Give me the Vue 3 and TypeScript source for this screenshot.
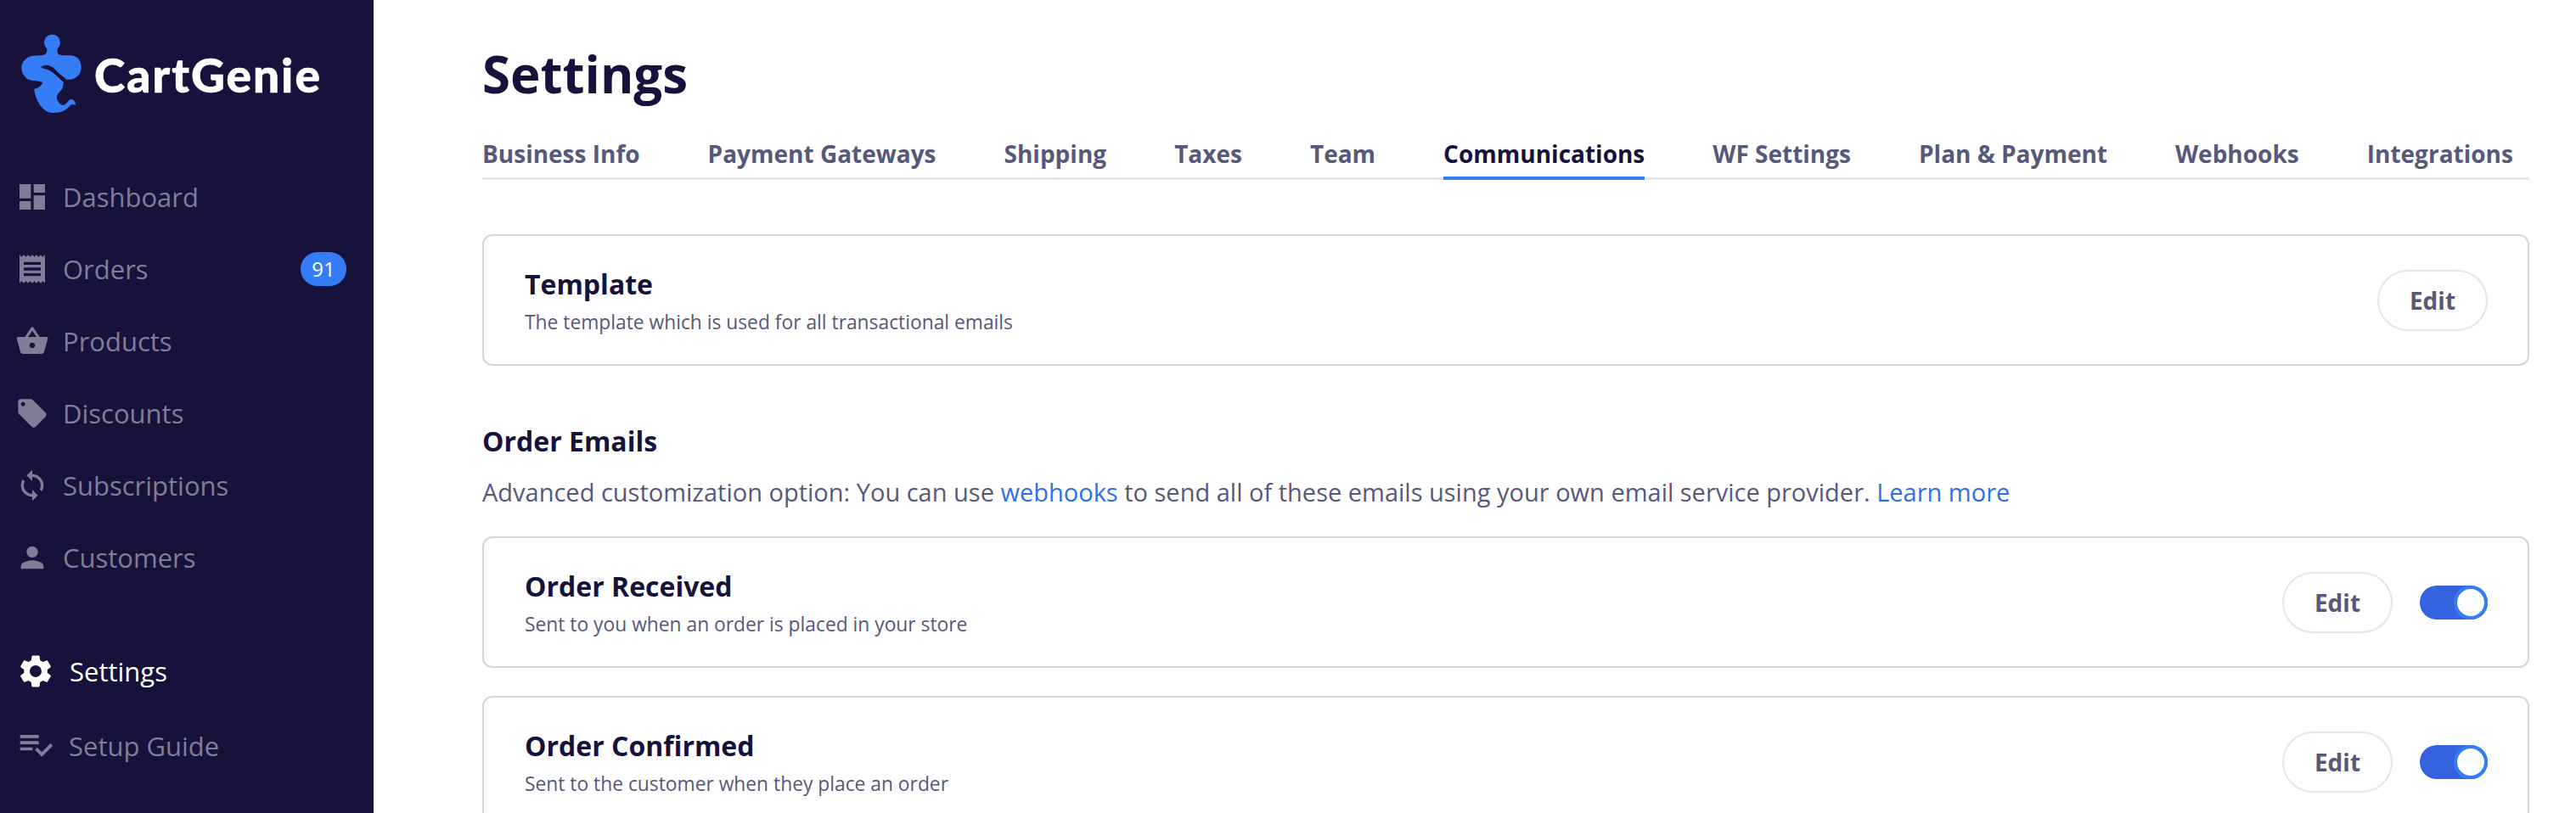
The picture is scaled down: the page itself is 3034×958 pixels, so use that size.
<script setup lang="ts">
interface NavItem { label: string; path: string; badge?: string }
const nav: NavItem[] = [
  { label: 'Dashboard', path: 'M3 13h8V3H3v10zm0 8h8v-6H3v6zm10 0h8V11h-8v10zm0-18v6h8V3h-8z' },
  { label: 'Orders', badge: '91', path: 'M18 17H6v-2h12v2zm0-4H6v-2h12v2zm0-4H6V7h12v2zM3 22l1.5-1.5L6 22l1.5-1.5L9 22l1.5-1.5L12 22l1.5-1.5L15 22l1.5-1.5L18 22l1.5-1.5L21 22V2l-1.5 1.5L18 2l-1.5 1.5L15 2l-1.5 1.5L12 2l-1.5 1.5L9 2 7.5 3.5 6 2 4.5 3.5 3 2v20z' },
  { label: 'Products', path: 'M17.21 9l-4.38-6.56c-.19-.28-.51-.42-.83-.42-.32 0-.64.14-.83.43L6.79 9H2c-.55 0-1 .45-1 1 0 .09.01.18.04.27l2.54 9.27c.23.84 1 1.46 1.92 1.46h13c.92 0 1.69-.62 1.93-1.46l2.54-9.27L23 10c0-.55-.45-1-1-1h-4.79zM9 9l3-4.4L15 9H9zm3 8c-1.1 0-2-.9-2-2s.9-2 2-2 2 .9 2 2-.9 2-2 2z' },
  { label: 'Discounts', path: 'M21.41 11.58l-9-9C12.05 2.22 11.55 2 11 2H4c-1.1 0-2 .9-2 2v7c0 .55.22 1.05.59 1.42l9 9c.36.36.86.58 1.41.58.55 0 1.05-.22 1.41-.59l7-7c.37-.36.59-.86.59-1.41 0-.55-.23-1.06-.59-1.42zM5.5 7C4.67 7 4 6.33 4 5.5S4.67 4 5.5 4 7 4.67 7 5.5 6.33 7 5.5 7z' },
  { label: 'Subscriptions', path: 'M12 4V1L8 5l4 4V6c3.31 0 6 2.69 6 6 0 1.01-.25 1.97-.7 2.8l1.46 1.46C19.54 15.03 20 13.57 20 12c0-4.42-3.58-8-8-8zm0 14c-3.31 0-6-2.69-6-6 0-1.01.25-1.97.7-2.8L5.24 7.74C4.46 8.97 4 10.43 4 12c0 4.42 3.58 8 8 8v3l4-4-4-4v3z' },
  { label: 'Customers', path: 'M12 12c2.21 0 4-1.79 4-4s-1.79-4-4-4-4 1.79-4 4 1.79 4 4 4zm0 2c-2.67 0-8 1.34-8 4v2h16v-2c0-2.66-5.33-4-8-4z' },
]
const gear = 'M19.14 12.94c.04-.3.06-.61.06-.94 0-.32-.02-.64-.07-.94l2.03-1.58c.18-.14.23-.41.12-.61l-1.92-3.32c-.12-.22-.37-.29-.59-.22l-2.39.96c-.5-.38-1.03-.7-1.62-.94l-.36-2.54c-.04-.24-.24-.41-.48-.41h-3.84c-.24 0-.43.17-.47.41l-.36 2.54c-.59.24-1.13.57-1.62.94l-2.39-.96c-.22-.08-.47 0-.59.22L2.74 8.87c-.12.21-.08.47.12.61l2.03 1.58c-.05.3-.09.63-.09.94s.02.64.07.94l-2.03 1.58c-.18.14-.23.41-.12.61l1.92 3.32c.12.22.37.29.59.22l2.39-.96c.5.38 1.03.7 1.62.94l.36 2.54c.05.24.24.41.48.41h3.84c.24 0 .44-.17.47-.41l.36-2.54c.59-.24 1.13-.56 1.62-.94l2.39.96c.22.08.47 0 .59-.22l1.92-3.32c.12-.22.07-.47-.12-.61l-2.01-1.58zM12 15.6c-1.98 0-3.6-1.62-3.6-3.6s1.62-3.6 3.6-3.6 3.6 1.62 3.6 3.6-1.62 3.6-3.6 3.6z'
const guide = 'M14 10H2v2h12v-2zm0-4H2v2h12V6zM2 16h8v-2H2v2zm19.5-4.5L23 13l-6.99 7-4.51-4.5L13 14l3.01 3 5.49-5.5z'
const tabs: string[] = ['Business Info', 'Payment Gateways', 'Shipping', 'Taxes', 'Team', 'Communications', 'WF Settings', 'Plan & Payment', 'Webhooks', 'Integrations']
const emails = [
  { title: 'Order Received', text: 'Sent to you when an order is placed in your store' },
  { title: 'Order Confirmed', text: 'Sent to the customer when they place an order' },
]
</script>

<template>
  <div class="page">
    <aside class="sidebar">
      <div class="logo">
        <svg class="genie" viewBox="0 0 100 140" width="100" height="140">
          <circle cx="61.500" cy="50" r="9.500" fill="#347df6" />
          <path fill="#347df6" d="M55 56L68 56C67 61 67 64 72 65C80 66 90 63 94 72C98 80 95 90 86 93C80 95 73 93 70 92L75 97L74 103C72 108 66 110 67 116C68 121 72 124 75 124C79 122 81 117 84 117C87 117 89 120 89 124C86 122 84 123 82 125C78 130 72 133 62 133C52 133 43 122 40 105C46 104 50 100 50 97C44 94 34 97 29 90C24 84 24 74 30 70C36 64 44 66 50 65C55 64 56 61 55 56Z" />
          <path fill="#17123c" d="M48 79C54 75 60 77 64 81C68 85 72 89 78 93L74 96C68 91 64 86 58 83C54 81 51 81 48 79Z" />
        </svg>
        <span class="brand">CartGenie</span>
      </div>
      <nav class="nav">
        <a v-for="item in nav" :key="item.label" class="nav-item">
          <svg class="icon" viewBox="0 0 24 24" width="40" height="40"><path :d="item.path" /></svg>
          <span class="nav-label">{{ item.label }}</span>
          <span v-if="item.badge" class="badge">{{ item.badge }}</span>
        </a>
      </nav>
      <nav class="nav-bottom">
        <a class="nav-item lower active">
          <svg class="icon" viewBox="0 0 24 24" width="46" height="46"><path :d="gear" /></svg>
          <span class="nav-label">Settings</span>
        </a>
        <a class="nav-item lower guide">
          <svg class="icon" viewBox="0 0 24 24" width="44" height="44"><path :d="guide" /></svg>
          <span class="nav-label">Setup Guide</span>
        </a>
      </nav>
    </aside>

    <main class="main">
      <h1 class="title">Settings</h1>
      <div class="tabs">
        <a v-for="t in tabs" :key="t" class="tab" :class="{ current: t === 'Communications' }">{{ t }}</a>
      </div>

      <section class="card first">
        <div>
          <div class="card-title">Template</div>
          <div class="card-text">The template which is used for all transactional emails</div>
        </div>
        <div class="actions"><button class="edit">Edit</button></div>
      </section>

      <h2 class="section-title">Order Emails</h2>
      <p class="section-text">Advanced customization option: You can use <a class="link">webhooks</a> to send all of these emails using your own email service provider. <a class="link">Learn more</a></p>

      <section v-for="e in emails" :key="e.title" class="card">
        <div>
          <div class="card-title">{{ e.title }}</div>
          <div class="card-text">{{ e.text }}</div>
        </div>
        <div class="actions">
          <button class="edit">Edit</button>
          <span class="toggle"><span class="knob"></span></span>
        </div>
      </section>
    </main>
  </div>
</template>

<style>
html, body { margin: 0; height: 100%; overflow: hidden; background: #fff; }
</style>

<style scoped>
.page {
  display: flex;
  width: 3034px;
  height: 958px;
  overflow: hidden;
  font-family: "Open Sans", sans-serif;
  background: #fff;
}
.sidebar {
  flex: 0 0 440px;
  height: 958px;
  box-sizing: border-box;
  background: #17123c;
}
.logo {
  display: flex;
  align-items: center;
  height: 140px;
  margin-bottom: 49px;
}
.genie { flex: none; }
.brand {
  margin-left: 11px;
  margin-top: 36px;
  font-family: "Lato", sans-serif;
  font-weight: 900;
  font-size: 55px;
  letter-spacing: 2px;
  -webkit-text-stroke: 0.6px #fff;
  color: #fff;
}
.nav { display: flex; flex-direction: column; }
.nav-item {
  display: flex;
  align-items: center;
  height: 85px;
  padding-left: 18px;
  color: #807d97;
  font-size: 31px;
}
.icon { flex: none; fill: currentColor; }
.nav-label { margin-left: 16px; }
.badge {
  margin-left: auto;
  margin-right: 32px;
  width: 54px;
  height: 40px;
  border-radius: 20px;
  background: #347df6;
  color: #fff;
  font-size: 24px;
  line-height: 40px;
  text-align: center;
}
.nav-bottom { margin-top: 48px; display: flex; flex-direction: column; }
.lower { height: 88px; padding-left: 19px; }
.lower .nav-label { margin-left: 17px; }
.guide { padding-left: 20px; }
.guide .icon { margin-top: -4px; }
.active { color: #fff; }
.main {
  flex: 1;
  min-width: 0;
  box-sizing: border-box;
  padding: 0 55px 0 128px;
}
.title {
  margin: 0;
  padding-top: 46px;
  font-size: 60px;
  line-height: 82px;
  font-weight: 700;
  color: #17123c;
}
.tabs {
  display: flex;
  justify-content: space-between;
  padding-right: 19px;
  margin-top: 22px;
  height: 62px;
  box-sizing: border-box;
  border-bottom: 3px solid #e5e5ea;
}
.tab {
  height: 62px;
  box-sizing: border-box;
  padding-top: 12px;
  font-size: 28px;
  line-height: 38px;
  font-weight: 700;
  color: #57587a;
  white-space: nowrap;
}
.tab.current {
  color: #17123c;
  border-bottom: 4px solid #347df6;
}
.card {
  display: flex;
  align-items: center;
  justify-content: space-between;
  box-sizing: border-box;
  height: 155px;
  margin-bottom: 33px;
  padding: 0 47px 0 48px;
  border: 2px solid #d3d6dc;
  border-radius: 12px;
}
.first { margin-top: 64px; margin-bottom: 0; }
.card-title {
  font-size: 32px;
  line-height: 44px;
  font-weight: 700;
  color: #17123c;
}
.card-text {
  margin-top: 8px;
  font-size: 22.8px;
  line-height: 30px;
  color: #57587a;
}
.actions { display: flex; align-items: center; gap: 32px; }
.edit {
  width: 130px;
  height: 72px;
  padding: 0;
  border: 2px solid #e5e5ea;
  border-radius: 36px;
  background: #fff;
  font-family: inherit;
  font-size: 28px;
  font-weight: 700;
  color: #57587a;
}
.toggle {
  display: block;
  position: relative;
  width: 80px;
  height: 40px;
  border-radius: 20px;
  background: #3563e0;
}
.knob {
  position: absolute;
  right: 0;
  top: 0;
  width: 40px;
  height: 40px;
  box-sizing: border-box;
  border-radius: 50%;
  border: 4px solid #347df6;
  background: #fff;
}
.section-title {
  margin: 68px 0 0;
  font-size: 32px;
  line-height: 42px;
  font-weight: 700;
  color: #17123c;
}
.section-text {
  margin: 20px 0 33px;
  font-size: 29px;
  line-height: 38px;
  color: #57587a;
  white-space: nowrap;
}
.link { color: #2e6fe6; }
</style>
